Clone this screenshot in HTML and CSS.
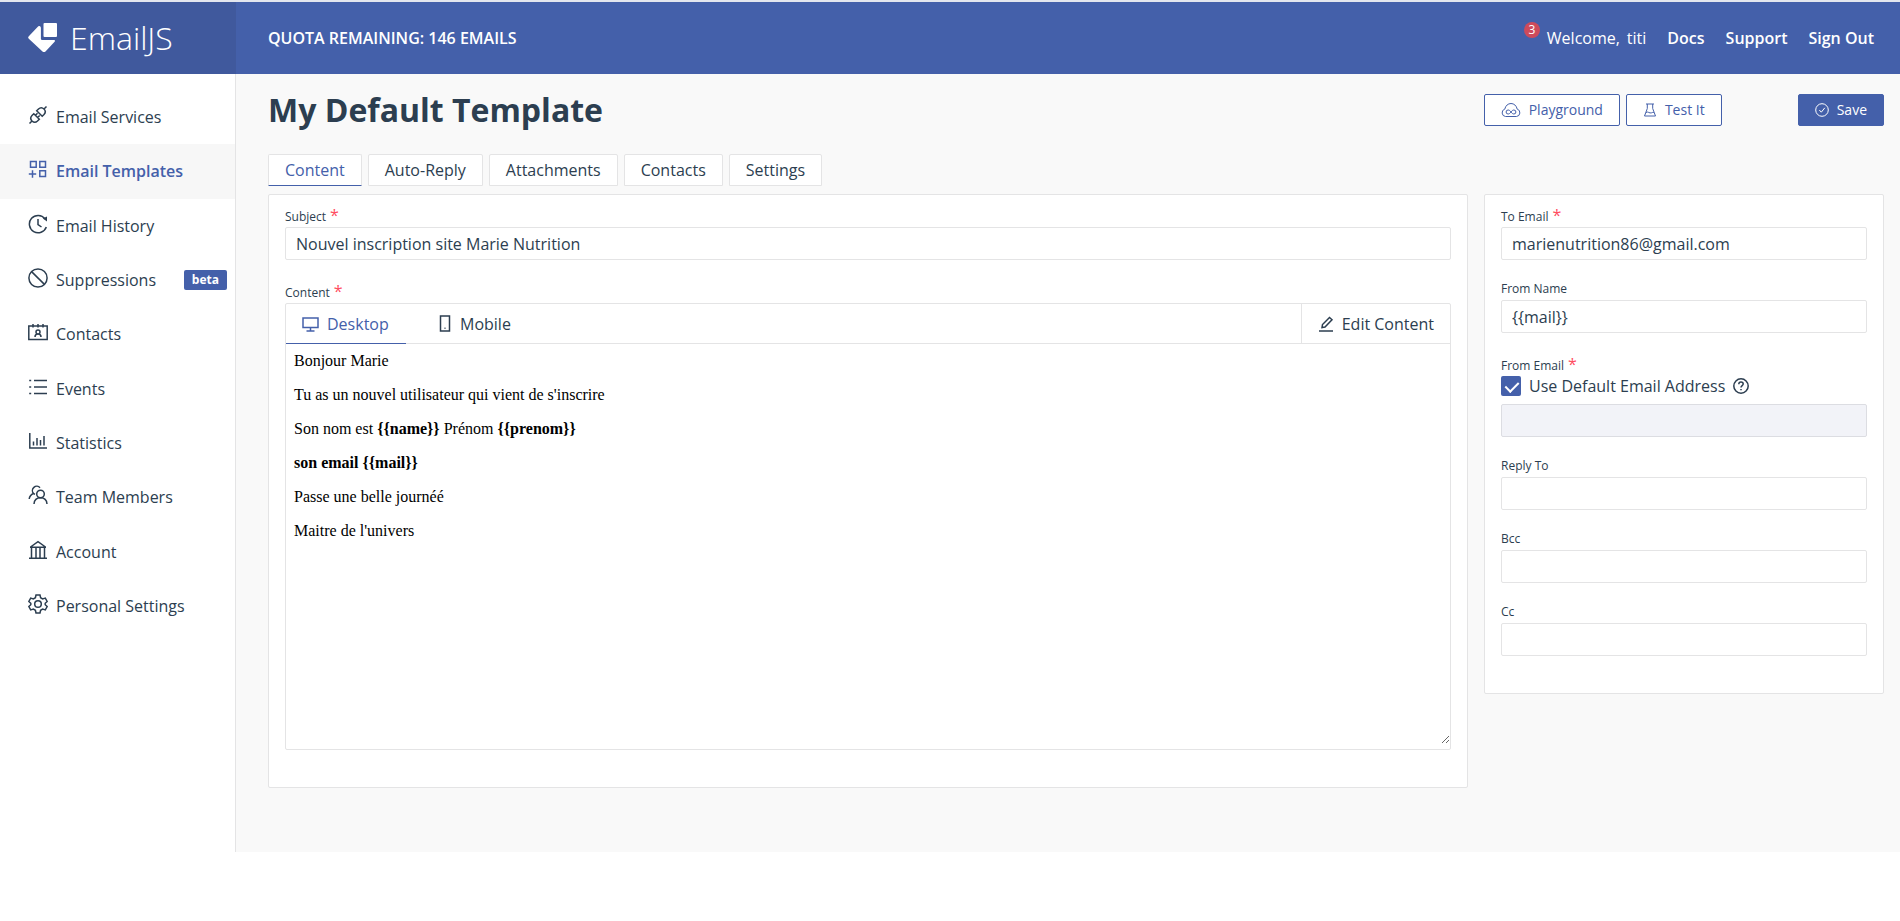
FILE: index.html
```html
<!DOCTYPE html>
<html lang="en">
<head>
<meta charset="utf-8">
<title>EmailJS - My Default Template</title>
<link rel="stylesheet" href="styles.css">
</head>
<body>
<header class="topbar">
  <a class="brand" href="#">
    <svg class="brand-mark" viewBox="0 0 30 30" aria-hidden="true"><path d="M16.500 0H28q1 0 1 1v12q0 1-1 1H16.500q-1 0-1-1V1q0-1 1-1z"/><path d="M10.300 3.300q1.600-1 2.200.5l.4 1v11q0 1.200 1.200 1.200h12q1.500.5.5 1.700L17.500 28.500q-1.500 1.200-3 0L.8 15.700q-1.300-1.200 0-2.500z"/></svg>
    <span>EmailJS</span>
  </a>
  <div class="topbar-main">
    <strong class="quota">QUOTA REMAINING: 146 EMAILS</strong>
    <nav class="user-nav">
      <div class="welcome"><span class="count">3</span><span>Welcome,</span><span class="user">titi</span></div>
      <a href="#">Docs</a>
      <a href="#">Support</a>
      <a href="#">Sign Out</a>
    </nav>
  </div>
</header>

<div class="layout">
  <aside class="sidebar">
    <ul class="menu">
      <li><a href="#"><svg class="icon" viewBox="0 0 20 20"><path d="M1.500 18.500 4 16M16 4l2.500-2.500M4 16a4 4 0 0 1 0-5.500L5.800 8.700l5.500 5.500L9.500 16A4 4 0 0 1 4 16zM16 4a4 4 0 0 1 0 5.500l-1.800 1.800-5.500-5.500L10.500 4A4 4 0 0 1 16 4zM7.500 10.300l2-2M9.700 12.500l2-2"/></svg>Email Services</a></li>
      <li><a class="active" href="#"><svg class="icon" viewBox="0 0 20 20"><path d="M2.500 2.500h5.700v5.700H2.500zM11.800 2.500h5.700v5.700h-5.700zM11.800 11.800h5.700v5.700h-5.700zM.8 15h7.400M4.500 11.300v7.400"/></svg>Email Templates</a></li>
      <li><a href="#"><svg class="icon" viewBox="0 0 20 20"><path d="M18.300 13A8.700 8.700 0 1 1 17 4.800M10 5v5.500l3.500 2.500"/><path class="solid" d="M14.800 4.500 19 2.500v5z"/></svg>Email History</a></li>
      <li><a href="#"><svg class="icon" viewBox="0 0 20 20"><circle cx="10" cy="10" r="9.100"/><path d="m3.600 3.600 12.800 12.800"/></svg>Suppressions<span class="beta">beta</span></a></li>
      <li><a href="#"><svg class="icon" viewBox="0 0 20 20"><path d="M.8 4h18.400v13.500H.8zM5 2v3.500M10 2v3.500M15 2v3.500M7 15c0-2 1-3 3-3s3 1 3 3M10 8a2 2 0 1 1 0 4 2 2 0 0 1 0-4"/></svg>Contacts</a></li>
      <li><a href="#"><svg class="icon" viewBox="0 0 20 20"><path d="M6 3.500h13M6 10h13M6 16.500h13M1.200 3.500h2M1.200 10h2M1.200 16.500h2"/></svg>Events</a></li>
      <li><a href="#"><svg class="icon" viewBox="0 0 20 20"><path d="M1.800 2v15H19M5.500 14.500v-4M9 14.500V7M12.500 14.500V9M16 14.500V5"/></svg>Statistics</a></li>
      <li><a href="#"><svg class="icon" viewBox="0 0 20 20"><circle cx="12.500" cy="9" r="3.800"/><path d="M6 19c.3-4 2.800-6.200 6.500-6.200S18.700 15 19 19M12 2.800A4 4 0 1 0 5.500 8.500C3 9.500 1.500 11.500 1.200 14M5.500 8.500l1.500.8"/></svg>Team Members</a></li>
      <li><a href="#"><svg class="icon" viewBox="0 0 20 20"><path d="M1 18.300h18M2 7.300h16M2.500 7 10 1.700 17.500 7M3.500 7.500v10.500M8 7.500v10.500M12 7.500v10.500M16.500 7.500v10.500"/></svg>Account</a></li>
      <li><a href="#"><svg class="icon" viewBox="0 0 20 20"><circle cx="10" cy="10" r="3.300"/><path d="M8 1h4l.6 2.700 2 1.200 2.700-.8 1.900 3.400-2 1.800v1.400l2 1.800-1.900 3.400-2.700-.8-2 1.200L12 19H8l-.6-2.700-2-1.200-2.700.8-1.900-3.400 2-1.800V9.300l-2-1.800 1.900-3.400 2.700.8 2-1.200z"/></svg>Personal Settings</a></li>
    </ul>
  </aside>

  <main class="main">
    <div class="page-head">
      <h1>My Default Template</h1>
      <div class="actions">
        <button class="btn" type="button"><svg class="wide" viewBox="0 0 20 16"><path d="M4.500 14.500a3.800 3.800 0 0 1-.7-7.400C4.500 3.700 7 1.500 10 1.500s5.500 2.200 6.200 5.600a3.800 3.800 0 0 1-.7 7.400zM10 10c-1-1.300-1.800-2-2.900-2a2 2 0 0 0 0 4c1.100 0 1.900-.7 2.900-2s1.800-2 2.900-2a2 2 0 0 1 0 4c-1.100 0-1.900-.7-2.900-2"/></svg>Playground</button>
        <button class="btn" type="button"><svg viewBox="0 0 14 14"><path d="M3 1h8M4.300 1v4.500L1.500 13h11L9.700 5.500V1M3 9.500c2-1.500 3.500 1.200 5.500.3.800-.4 1.500-.5 2.300-.3"/></svg>Test It</button>
        <button class="btn primary" type="button"><svg viewBox="0 0 14 14"><circle cx="7" cy="7" r="6.300"/><path d="m4.300 7 2 2.200L9.800 4.800"/></svg>Save</button>
      </div>
    </div>

    <nav class="tabs">
      <a class="active" href="#">Content</a>
      <a href="#">Auto-Reply</a>
      <a href="#">Attachments</a>
      <a href="#">Contacts</a>
      <a href="#">Settings</a>
    </nav>

    <form class="panels">
      <section class="card">
        <div class="field">
          <label class="required" for="subject">Subject</label>
          <input class="text" id="subject" type="text" value="Nouvel inscription site Marie Nutrition">
        </div>
        <div class="field">
          <div class="label required">Content</div>
          <div class="editor">
            <div class="editor-bar">
              <button class="view active" type="button"><svg viewBox="0 0 17 16"><path d="M1 2h15v9.500H1zM8.500 11.500V15M4.500 15h8"/></svg>Desktop</button>
              <button class="view" type="button"><svg class="phone" viewBox="0 0 14 17"><path d="M2.500 1h9v15h-9zM6.500 13.300h1"/></svg>Mobile</button>
              <button class="edit" type="button"><svg viewBox="0 0 16 16"><path d="M1 15h14M4 11.500l.5-3L11.500 1.500l2.500 2.300L7 11z"/></svg>Edit Content</button>
            </div>
            <div class="preview">
              <p>Bonjour Marie</p>
              <p>Tu as un nouvel utilisateur qui vient de s'inscrire</p>
              <p>Son nom est <b>{{name}}</b> Prénom <b>{{prenom}}</b></p>
              <p><b>son email {{mail}}</b></p>
              <p>Passe une belle journéé</p>
              <p>Maitre de l'univers</p>
            </div>
          </div>
        </div>
      </section>

      <section class="card">
        <div class="field">
          <label class="required" for="to">To Email</label>
          <input class="text" id="to" type="text" value="marienutrition86@gmail.com">
        </div>
        <div class="field">
          <label for="from-name">From Name</label>
          <input class="text" id="from-name" type="text" value="{{mail}}">
        </div>
        <div class="field">
          <label class="required" for="from-email">From Email</label>
          <div class="check-row">
            <input class="check" id="use-default" type="checkbox" checked>
            <label class="check-label" for="use-default">Use Default Email Address</label>
            <svg viewBox="0 0 16 16"><circle cx="8" cy="8" r="7.200"/><path d="M5.800 6.300c0-1.400.9-2.200 2.200-2.200s2.200.8 2.200 2c0 1.500-2.200 1.600-2.200 3.300M8 11v1.300"/></svg>
          </div>
          <input class="text" id="from-email" type="text" disabled>
        </div>
        <div class="field">
          <label for="reply">Reply To</label>
          <input class="text" id="reply" type="text">
        </div>
        <div class="field">
          <label for="bcc">Bcc</label>
          <input class="text" id="bcc" type="text">
        </div>
        <div class="field">
          <label for="cc">Cc</label>
          <input class="text" id="cc" type="text">
        </div>
      </section>
    </form>
  </main>
</div>
</body>
</html>
```
FILE: styles.css
```css
:root {
  --blue: #4460aa;
  --ink: #2c3e50;
  --line: #e4e4e5;
}

* { box-sizing: border-box; }

body {
  margin: 0;
  border-top: 2px solid #e3e6ee;
  background: #fff;
  color: var(--ink);
  font: 16px/24px "Open Sans", "Noto Sans", sans-serif;
}

a { color: inherit; text-decoration: none; }
button { font: inherit; color: inherit; cursor: pointer; }
svg { flex: none; fill: none; stroke: currentColor; stroke-width: 1.5; }

/* Top bar */
.topbar { display: flex; height: 72px; background: var(--blue); color: #fff; }

.brand {
  display: flex;
  align-items: center;
  gap: 12px;
  width: 236px;
  padding-left: 28px;
  background: #40599d;
  font-size: 32px;
  font-weight: 300;
}
.brand-mark { width: 30px; height: 30px; fill: #fff; stroke: none; }

.topbar-main {
  display: flex;
  flex: 1;
  align-items: center;
  justify-content: space-between;
  padding: 0 26px 0 32px;
}
.quota { font-weight: 600; }
.user-nav { display: flex; gap: 21px; font-weight: 600; }
.welcome { display: flex; gap: 7px; font-weight: 500; }
.count {
  width: 16px;
  height: 16px;
  margin-top: -4px;
  border-radius: 8px;
  background: #cd4a5b;
  font-size: 12px;
  line-height: 16px;
  text-align: center;
}

/* Sidebar */
.layout { display: flex; }
.sidebar { width: 236px; border-right: 1px solid var(--line); }
.menu {
  display: grid;
  grid-auto-rows: 1fr;
  height: 543px;
  margin: 16px 0;
  padding: 0;
  list-style: none;
}
.menu a {
  display: flex;
  align-items: center;
  gap: 8px;
  height: 100%;
  padding: 0 8px 0 28px;
}
.menu .active { background: #f7f7f7; color: var(--blue); font-weight: 600; }
.icon { width: 20px; height: 20px; margin-bottom: 4px; }
.solid { fill: currentColor; stroke: none; }
.beta {
  margin-left: auto;
  padding: 0 8px;
  border-radius: 2px;
  background: var(--blue);
  color: #fff;
  font-size: 12px;
  font-weight: 700;
  line-height: 20px;
}

/* Page heading */
.main { flex: 1; min-width: 0; padding: 12px 16px 64px 32px; background: #f9f9f9; }
.page-head { display: flex; align-items: center; justify-content: space-between; height: 48px; }
h1 { margin: 0; font-size: 32px; line-height: 48px; }
.actions { display: flex; gap: 6px; }
.btn {
  display: flex;
  align-items: center;
  gap: 8px;
  height: 32px;
  padding: 0 16px;
  border: 1px solid var(--blue);
  border-radius: 2px;
  background: #fff;
  color: var(--blue);
  font-size: 14px;
}
.btn svg { width: 14px; height: 14px; stroke-width: 1; }
.btn .wide { width: 20px; height: 16px; }
.primary { margin-left: 70px; background: var(--blue); color: #fff; font-weight: 500; }

/* Tabs */
.tabs { display: flex; gap: 6px; margin: 20px 0 8px; }
.tabs a {
  padding: 3px 16px;
  border: 1px solid var(--line);
  border-radius: 2px 2px 0 0;
  background: #fff;
}
.tabs .active { border-bottom-color: var(--blue); color: var(--blue); }

/* Form cards */
.panels { display: grid; grid-template-columns: 3fr 1fr; gap: 16px; align-items: start; }
.card {
  padding: 6px 16px 20px;
  border: 1px solid var(--line);
  border-radius: 2px;
  background: #fff;
}
.field { margin-bottom: 17px; }
.field > label, .label {
  display: block;
  height: 23px;
  font-size: 12px;
  line-height: 23px;
}
.field > .required { height: 26px; padding-top: 5px; line-height: 21px; }
.required::after {
  content: "*";
  margin-left: 4px;
  color: #ff4d5f;
  font-size: 16px;
  line-height: 16px;
}
.text {
  display: block;
  width: 100%;
  height: 33px;
  padding: 0 10px;
  border: 1px solid var(--line);
  border-radius: 2px;
  background: #fff;
  color: var(--ink);
  font: inherit;
}
.text:disabled { border-color: #dcdde2; background: #f2f3f8; }

.check-row { display: flex; align-items: center; gap: 8px; height: 20px; margin-bottom: 8px; }
.check {
  appearance: none;
  width: 20px;
  height: 20px;
  margin: 0;
  border-radius: 2px;
  background: var(--blue);
}
.check:checked::before {
  content: "";
  display: block;
  width: 6px;
  height: 11px;
  margin: 3px 7px;
  border: solid #fff;
  border-width: 0 2px 2px 0;
  transform: rotate(45deg);
}
.check-row svg { width: 16px; height: 16px; }

/* Message editor */
.editor { padding-bottom: 5px; border: 1px solid var(--line); border-radius: 2px; }
.editor-bar { display: flex; border-bottom: 1px solid var(--line); }
.editor-bar button {
  display: flex;
  align-items: center;
  gap: 8px;
  height: 40px;
  margin-bottom: -1px;
  padding: 0 16px;
  border: 0;
  background: none;
}
.editor-bar svg { width: 17px; height: 16px; }
.editor-bar .edit svg { width: 16px; }
.editor-bar .phone { width: 14px; height: 17px; }
.editor-bar .view { width: 120px; margin-right: 16px; border-bottom: 1px solid transparent; }
.editor-bar .active { border-bottom-color: var(--blue); color: var(--blue); }
.editor-bar .edit { margin-left: auto; border-left: 1px solid var(--line); }
.preview {
  height: 400px;
  padding: 8px;
  overflow: auto;
  resize: vertical;
  color: #000;
  font: 16px/18px "Liberation Serif", "Times New Roman", serif;
}
.preview p { margin: 0 0 16px; }
```
